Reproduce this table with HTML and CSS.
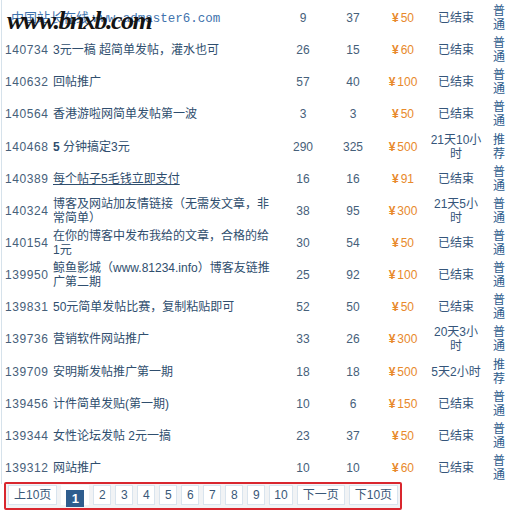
FILE: index.html
```html
<!doctype html>
<html lang="zh-CN">
<head>
    <meta charset="utf-8">
    <title>任务列表</title>
    <link rel="stylesheet" href="styles.css">
</head>
<body>

<div class="list">
    <span class="mark">www.bnxb.com</span>
    <table class="tasks">
        <colgroup>
            <col class="c-id">
            <col class="c-title">
            <col class="c-num">
            <col class="c-num">
            <col class="c-price">
            <col class="c-state">
            <col class="c-kind">
        </colgroup>
        <tr>
            <td class="ad" colspan="2"><a href="#">中国站长在线 <span class="url">www.admaster6.com</span></a></td>
            <td class="num">9</td><td class="num">37</td>
            <td class="price"><b>¥</b>50</td><td class="state">已结束</td><td class="kind">普通</td>
        </tr>
        <tr>
            <td class="id">140734</td><td class="title">3元一稿 超简单发帖，灌水也可</td>
            <td class="num">26</td><td class="num">15</td>
            <td class="price"><b>¥</b>60</td><td class="state">已结束</td><td class="kind">普通</td>
        </tr>
        <tr>
            <td class="id">140632</td><td class="title">回帖推广</td>
            <td class="num">57</td><td class="num">40</td>
            <td class="price"><b>¥</b>100</td><td class="state">已结束</td><td class="kind">普通</td>
        </tr>
        <tr>
            <td class="id">140564</td><td class="title">香港游啦网简单发帖第一波</td>
            <td class="num">3</td><td class="num">3</td>
            <td class="price"><b>¥</b>50</td><td class="state">已结束</td><td class="kind">普通</td>
        </tr>
        <tr>
            <td class="id">140468</td><td class="title"><strong>5</strong> 分钟搞定3元</td>
            <td class="num">290</td><td class="num">325</td>
            <td class="price"><b>¥</b>500</td><td class="state">21天10小时</td><td class="kind">推荐</td>
        </tr>
        <tr>
            <td class="id">140389</td><td class="title"><a class="hover" href="#">每个帖子5毛钱立即支付</a></td>
            <td class="num">16</td><td class="num">16</td>
            <td class="price"><b>¥</b>91</td><td class="state">已结束</td><td class="kind">普通</td>
        </tr>
        <tr>
            <td class="id">140324</td><td class="title">博客及网站加友情链接（无需发文章，非常简单）</td>
            <td class="num">38</td><td class="num">95</td>
            <td class="price"><b>¥</b>300</td><td class="state">21天5小时</td><td class="kind">普通</td>
        </tr>
        <tr>
            <td class="id">140154</td><td class="title">在你的博客中发布我给的文章，合格的给1元</td>
            <td class="num">30</td><td class="num">54</td>
            <td class="price"><b>¥</b>50</td><td class="state">已结束</td><td class="kind">普通</td>
        </tr>
        <tr>
            <td class="id">139950</td><td class="title">鲸鱼影城（www.81234.info）博客友链推广第二期</td>
            <td class="num">25</td><td class="num">92</td>
            <td class="price"><b>¥</b>100</td><td class="state">已结束</td><td class="kind">普通</td>
        </tr>
        <tr>
            <td class="id">139831</td><td class="title">50元简单发帖比赛，复制粘贴即可</td>
            <td class="num">52</td><td class="num">50</td>
            <td class="price"><b>¥</b>50</td><td class="state">已结束</td><td class="kind">普通</td>
        </tr>
        <tr>
            <td class="id">139736</td><td class="title">营销软件网站推广</td>
            <td class="num">33</td><td class="num">26</td>
            <td class="price"><b>¥</b>300</td><td class="state">20天3小时</td><td class="kind">普通</td>
        </tr>
        <tr>
            <td class="id">139709</td><td class="title">安明斯发帖推广第一期</td>
            <td class="num">18</td><td class="num">18</td>
            <td class="price"><b>¥</b>500</td><td class="state">5天2小时</td><td class="kind">推荐</td>
        </tr>
        <tr>
            <td class="id">139456</td><td class="title">计件简单发贴(第一期)</td>
            <td class="num">10</td><td class="num">6</td>
            <td class="price"><b>¥</b>150</td><td class="state">已结束</td><td class="kind">普通</td>
        </tr>
        <tr>
            <td class="id">139344</td><td class="title">女性论坛发帖 2元一搞</td>
            <td class="num">23</td><td class="num">37</td>
            <td class="price"><b>¥</b>50</td><td class="state">已结束</td><td class="kind">普通</td>
        </tr>
        <tr>
            <td class="id">139312</td><td class="title">网站推广</td>
            <td class="num">10</td><td class="num">10</td>
            <td class="price"><b>¥</b>60</td><td class="state">已结束</td><td class="kind">普通</td>
        </tr>
    </table>
</div>

<div class="pager">
    <a href="#" class="page wide">上10页</a>
    <span class="current"><b>1</b></span>
    <a href="#" class="page">2</a>
    <a href="#" class="page">3</a>
    <a href="#" class="page">4</a>
    <a href="#" class="page">5</a>
    <a href="#" class="page">6</a>
    <a href="#" class="page">7</a>
    <a href="#" class="page">8</a>
    <a href="#" class="page">9</a>
    <a href="#" class="page">10</a>
    <a href="#" class="page wide">下一页</a>
    <a href="#" class="page wide">下10页</a>
</div>

</body>
</html>
```

FILE: styles.css
```css
body {
    margin: 0;
    font-family: 'Liberation Sans', 'Noto Sans CJK SC', sans-serif;
    font-size: 12px;
    color: #2f4e6e;
    background-color: #fff;
}

a {
    color: inherit;
    text-decoration: none;
}

.list {
    position: relative;
    margin-left: 1px;
    padding-top: 2px;
    border-left: 1px solid #d6e2eb;
}

/* site watermark stamped over the first row */
.mark {
    position: absolute;
    left: 5px;
    top: 6px;
    font-family: 'Liberation Serif', serif;
    font-style: italic;
    font-weight: bold;
    font-size: 26px;
    letter-spacing: -1.5px;
    color: #141414;
    z-index: 2;
}

.tasks {
    width: 512px;
    border-collapse: collapse;
    table-layout: fixed;
}

.c-id { width: 48px; }
.c-title { width: 228px; }
.c-num { width: 50px; }
.c-price { width: 50px; }
.c-state { width: 56px; }
.c-kind { width: 30px; }

.tasks td {
    height: 32.15px;
    padding: 0;
    line-height: 14px;
    vertical-align: middle;
}

.tasks td.id {
    padding-left: 3px;
    letter-spacing: 0.6px;
    color: #46607a;
}

.tasks td.title {
    padding: 0 5px 0 3px;
}

.tasks td.ad {
    padding-left: 9px;
    font-size: 13px;
    color: #3f73ad;
}

.url {
    font-family: 'Liberation Mono', monospace;
    font-size: 12.5px;
}

.hover {
    text-decoration: underline;
}

.num {
    text-align: center;
    color: #46607a;
}

.price {
    text-align: center;
    color: #e8892b;
}

.price b {
    margin-right: 2px;
}

.state {
    text-align: center;
    color: #35557a;
}

.tasks td.kind {
    padding: 0 7px;
    text-align: center;
    color: #2d5b8c;
}

.pager {
    display: inline-flex;
    align-items: flex-start;
    gap: 4px;
    margin-top: -2px;
    margin-left: 4px;
    padding: 1px 2px 3px;
    border: 2px solid #d9262e;
    border-radius: 2px;
    background-color: #f1f3f5;
}

.page {
    box-sizing: border-box;
    height: 20px;
    line-height: 18px;
    min-width: 18px;
    padding: 0 4px;
    border: 1px solid #d9e4ee;
    background-color: #fff;
    text-align: center;
    color: #3a5878;
}

.page.wide {
    padding: 0 5px;
}

.current {
    width: 28px;
    height: 20px;
    display: flex;
    justify-content: center;
    background-color: #fff;
}

.current b {
    margin-top: 5px;
    width: 18px;
    height: 17px;
    line-height: 18px;
    text-align: center;
    font-size: 13px;
    color: #fff;
    background-color: #2f5d8e;
}
```
